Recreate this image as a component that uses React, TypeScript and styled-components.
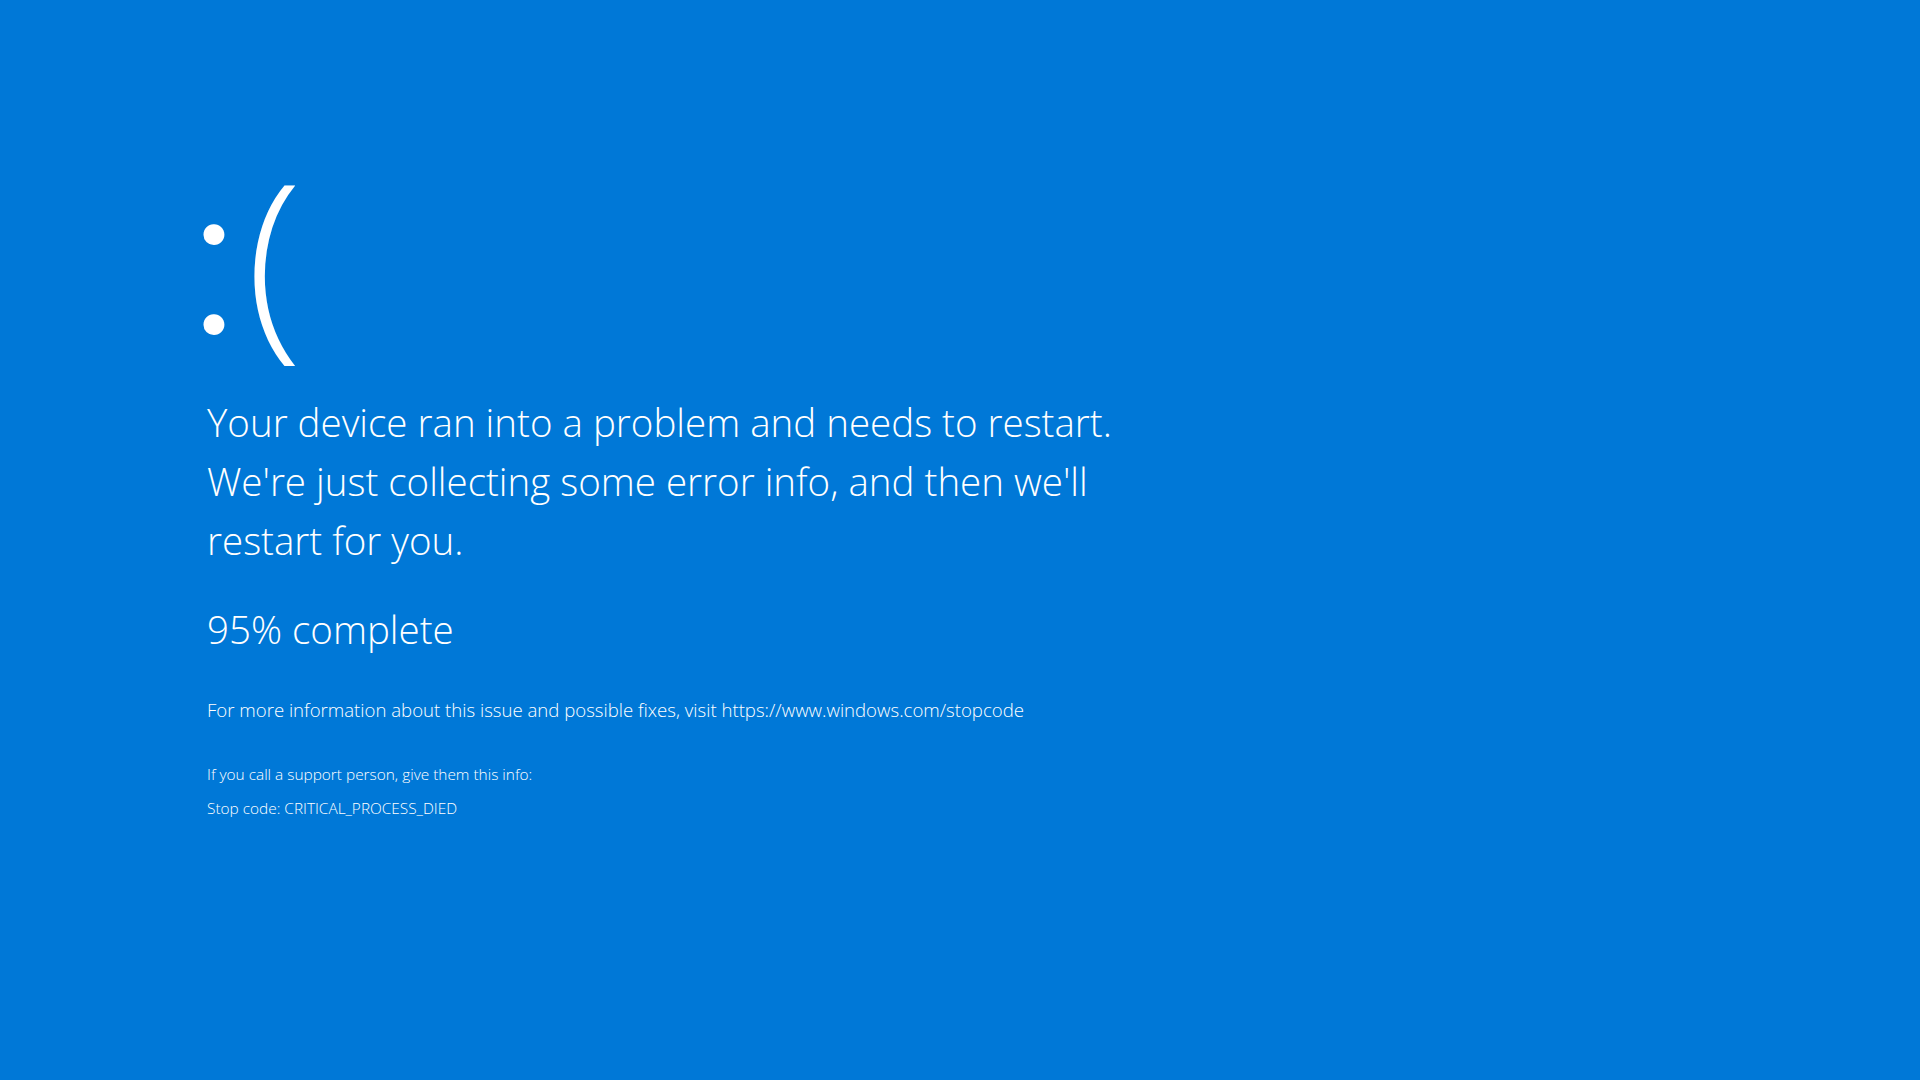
import React from 'react';
import styled, {createGlobalStyle} from 'styled-components';

const GlobalStyle = createGlobalStyle`
  html, body {
    margin: 0;
    padding: 0;
    background: #0078d7;
  }
  body {
    font-family: "Open Sans", "Noto Sans", "Liberation Sans", sans-serif;
    color: #ffffff;
    -webkit-font-smoothing: antialiased;
  }
`;

const App = () => {
  return (
    <>
      <GlobalStyle/>
      <Screen>
        <Face><Colon>:</Colon><Paren>(</Paren></Face>
        <Message>
          Your device ran into a problem and needs to restart.<br/>
          We're just collecting some error info, and then we'll<br/>
          restart for you.
        </Message>
        <Progress>95% complete</Progress>
        <MoreInfo>
          For more information about this issue and possible fixes, visit https://www.windows.com/stopcode
        </MoreInfo>
        <Support>
          <SmallLine>If you call a support person, give them this info:</SmallLine>
          <SmallLine>Stop code: CRITICAL_PROCESS_DIED</SmallLine>
        </Support>
      </Screen>
    </>
  )
}

export default App;

const Screen = styled.div`
  width: 1920px;
  height: 1080px;
  box-sizing: border-box;
  padding: 132px 0 0 207px;
  background: #0078d7;
  display: flex;
  flex-direction: column;
  align-items: flex-start;
  overflow: hidden;
`;
const Face = styled.div`
  height: 245px;
  margin-left: -20px;
  font-size: 204px;
  font-weight: 300;
  line-height: 245px;
  white-space: nowrap;
`;
// Lato draws round colon dots, like the Segoe UI Light original
const Colon = styled.span`
  font-family: Lato, "Open Sans", sans-serif;
  font-size: 225px;
  line-height: 0;
`;
const Paren = styled.span`
  margin-left: 5px;
  font-size: 206px;
  line-height: 0;
`;
const Message = styled.p`
  margin: 16px 0 0;
  font-size: 38.5px;
  font-weight: 300;
  line-height: 59px;
`;
const Progress = styled.p`
  margin: 30px 0 0;
  font-size: 38.5px;
  font-weight: 300;
  line-height: 59px;
`;
const MoreInfo = styled.p`
  margin: 38px 0 0;
  font-size: 18.6px;
  font-weight: 300;
  line-height: 26px;
`;
const Support = styled.div`
  margin-top: 41px;
  display: flex;
  flex-direction: column;
  gap: 12px;
`;
const SmallLine = styled.p`
  margin: 0;
  font-size: 15.4px;
  font-weight: 300;
  line-height: 22px;
`;
